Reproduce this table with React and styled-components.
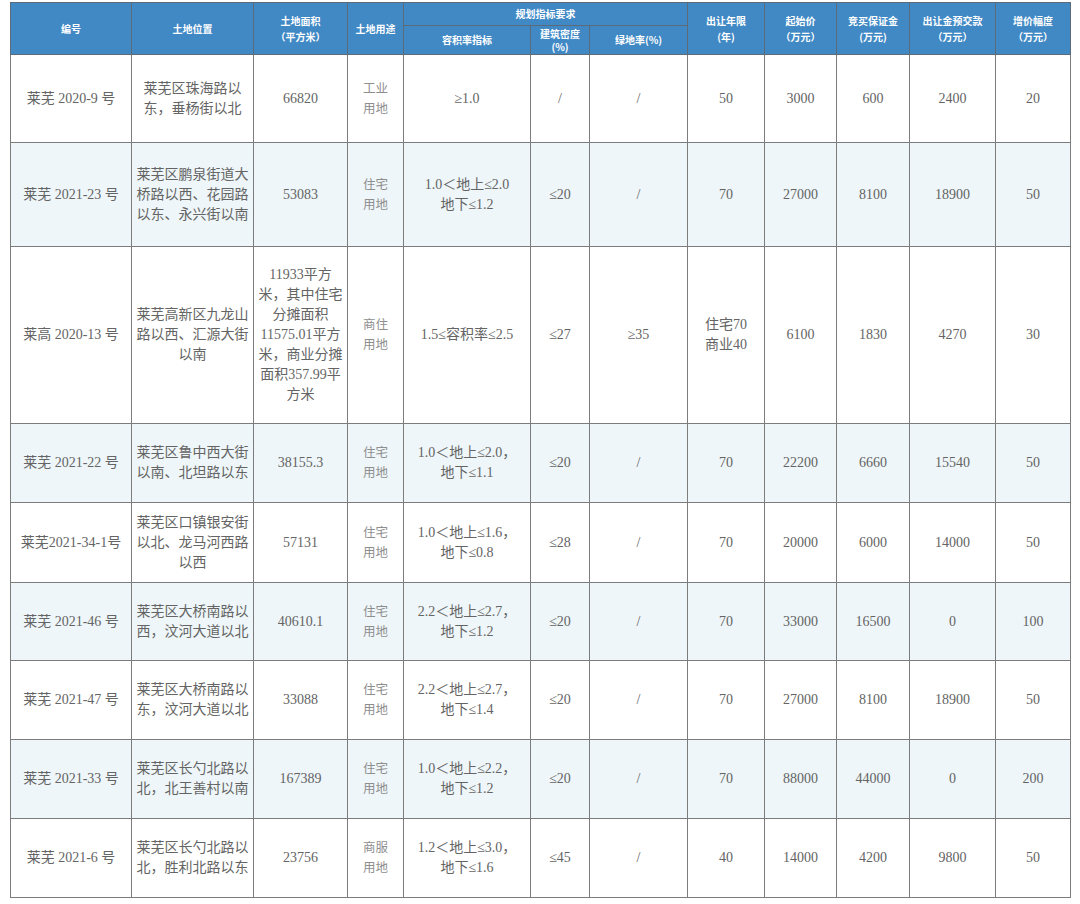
import React from "react";
import styled, { createGlobalStyle } from "styled-components";

const GlobalStyle = createGlobalStyle`
  html, body {
    margin: 0;
    padding: 0;
    background: #ffffff;
  }
`;

const widths = [121, 122, 94, 56, 127, 59, 98, 77, 72, 73, 86, 75];

const rows = [
  {
    height: 88,
    cells: [
      "莱芜 2020-9 号",
      ["莱芜区珠海路以", "东，垂杨街以北"],
      "66820",
      ["工业", "用地"],
      "≥1.0",
      "/",
      "/",
      "50",
      "3000",
      "600",
      "2400",
      "20",
    ],
  },
  {
    height: 104,
    cells: [
      "莱芜 2021-23 号",
      ["莱芜区鹏泉街道大", "桥路以西、花园路", "以东、永兴街以南"],
      "53083",
      ["住宅", "用地"],
      ["1.0＜地上≤2.0", "地下≤1.2"],
      "≤20",
      "/",
      "70",
      "27000",
      "8100",
      "18900",
      "50",
    ],
  },
  {
    height: 177,
    cells: [
      "莱高 2020-13 号",
      ["莱芜高新区九龙山", "路以西、汇源大街", "以南"],
      ["11933平方", "米，其中住宅", "分摊面积", "11575.01平方", "米，商业分摊", "面积357.99平", "方米"],
      ["商住", "用地"],
      "1.5≤容积率≤2.5",
      "≤27",
      "≥35",
      ["住宅70", "商业40"],
      "6100",
      "1830",
      "4270",
      "30",
    ],
  },
  {
    height: 79,
    cells: [
      "莱芜 2021-22 号",
      ["莱芜区鲁中西大街", "以南、北坦路以东"],
      "38155.3",
      ["住宅", "用地"],
      ["1.0＜地上≤2.0，", "地下≤1.1"],
      "≤20",
      "/",
      "70",
      "22200",
      "6660",
      "15540",
      "50",
    ],
  },
  {
    height: 80,
    cells: [
      "莱芜2021-34-1号",
      ["莱芜区口镇银安街", "以北、龙马河西路", "以西"],
      "57131",
      ["住宅", "用地"],
      ["1.0＜地上≤1.6，", "地下≤0.8"],
      "≤28",
      "/",
      "70",
      "20000",
      "6000",
      "14000",
      "50",
    ],
  },
  {
    height: 78,
    cells: [
      "莱芜 2021-46 号",
      ["莱芜区大桥南路以", "西，汶河大道以北"],
      "40610.1",
      ["住宅", "用地"],
      ["2.2＜地上≤2.7，", "地下≤1.2"],
      "≤20",
      "/",
      "70",
      "33000",
      "16500",
      "0",
      "100",
    ],
  },
  {
    height: 79,
    cells: [
      "莱芜 2021-47 号",
      ["莱芜区大桥南路以", "东，汶河大道以北"],
      "33088",
      ["住宅", "用地"],
      ["2.2＜地上≤2.7，", "地下≤1.4"],
      "≤20",
      "/",
      "70",
      "27000",
      "8100",
      "18900",
      "50",
    ],
  },
  {
    height: 79,
    cells: [
      "莱芜 2021-33 号",
      ["莱芜区长勺北路以", "北，北王善村以南"],
      "167389",
      ["住宅", "用地"],
      ["1.0＜地上≤2.2，", "地下≤1.2"],
      "≤20",
      "/",
      "70",
      "88000",
      "44000",
      "0",
      "200",
    ],
  },
  {
    height: 79,
    cells: [
      "莱芜 2021-6 号",
      ["莱芜区长勺北路以", "北，胜利北路以东"],
      "23756",
      ["商服", "用地"],
      ["1.2＜地上≤3.0，", "地下≤1.6"],
      "≤45",
      "/",
      "40",
      "14000",
      "4200",
      "9800",
      "50",
    ],
  },
];

const Lines = ({ value }) =>
  Array.isArray(value)
    ? value.map((line, i) => (
        <React.Fragment key={i}>
          {i > 0 && <br />}
          {line}
        </React.Fragment>
      ))
    : value;

export default function App() {
  return (
    <Page>
      <GlobalStyle />
      <Table>
        <colgroup>
          {widths.map((w, i) => (
            <col key={i} style={{ width: w }} />
          ))}
        </colgroup>
        <thead>
          <HeadRow $height={23}>
            <HeadCell rowSpan={2}>编号</HeadCell>
            <HeadCell rowSpan={2}>土地位置</HeadCell>
            <HeadCell rowSpan={2}>
              土地面积
              <br />
              （平方米）
            </HeadCell>
            <HeadCell rowSpan={2}>土地用途</HeadCell>
            <HeadCell colSpan={3}>规划指标要求</HeadCell>
            <HeadCell rowSpan={2}>
              出让年限
              <br />
              (年)
            </HeadCell>
            <HeadCell rowSpan={2}>
              起始价
              <br />
              （万元）
            </HeadCell>
            <HeadCell rowSpan={2}>
              竞买保证金
              <br />
              (万元)
            </HeadCell>
            <HeadCell rowSpan={2}>
              出让金预交款
              <br />
              （万元）
            </HeadCell>
            <HeadCell rowSpan={2}>
              增价幅度
              <br />
              （万元）
            </HeadCell>
          </HeadRow>
          <HeadRow $height={29}>
            <HeadCell>容积率指标</HeadCell>
            <HeadCell $tight>
              建筑密度
              <br />
              (%)
            </HeadCell>
            <HeadCell>绿地率(%)</HeadCell>
          </HeadRow>
        </thead>
        <tbody>
          {rows.map((row, r) => (
            <BodyRow key={r} $height={row.height} $shade={r % 2 === 1}>
              {row.cells.map((cell, c) => (
                <Cell key={c} $light={c === 3} $tight={c === 0}>
                  <Lines value={cell} />
                </Cell>
              ))}
            </BodyRow>
          ))}
        </tbody>
      </Table>
    </Page>
  );
}

const Page = styled.div`
  padding: 2px 10px 0 10px;
`;

const Table = styled.table`
  width: 1060px;
  table-layout: fixed;
  border-collapse: collapse;
  font-family: "Liberation Serif", "Noto Sans CJK SC", serif;
`;

const HeadRow = styled.tr`
  height: ${(p) => p.$height}px;
`;

const HeadCell = styled.th`
  background: #4189c5;
  color: #ffffff;
  font-family: "Noto Sans CJK SC", sans-serif;
  font-size: 10px;
  font-weight: 700;
  line-height: ${(p) => (p.$tight ? "13px" : "16px")};
  text-align: center;
  vertical-align: middle;
  padding: 0 2px;
  border: 1px solid #5d6b78;
`;

const BodyRow = styled.tr`
  height: ${(p) => p.$height}px;
  background: ${(p) => (p.$shade ? "#eef6f9" : "#ffffff")};
`;

const Cell = styled.td`
  color: ${(p) => (p.$light ? "#8e8e8e" : "#646464")};
  font-size: ${(p) => (p.$light ? "12.5px" : "14px")};
  line-height: 20px;
  text-align: center;
  vertical-align: middle;
  padding: 0 ${(p) => (p.$tight ? "0" : "3px")};
  white-space: nowrap;
  border: 1px solid #7c7c7c;
`;
